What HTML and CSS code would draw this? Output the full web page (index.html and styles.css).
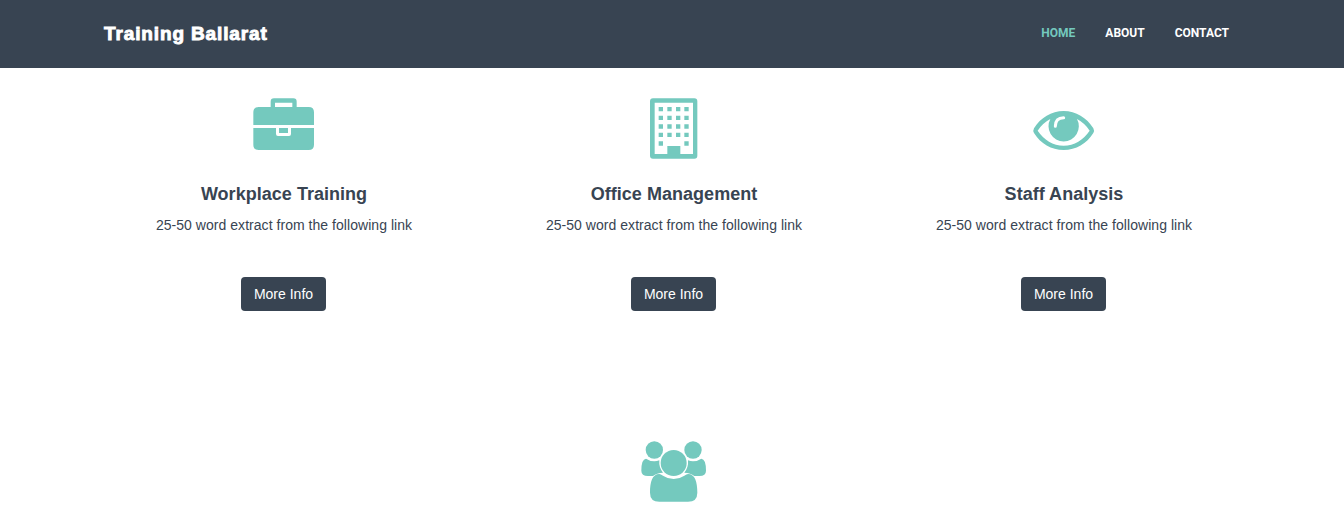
FILE: index.html
```html
<!DOCTYPE html>
<html lang="en">
<head>
<meta charset="utf-8">
<title>Training Ballarat</title>
<link rel="stylesheet" href="styles.css">
</head>
<body>
<header class="navbar">
  <div class="container navbar-inner">
    <a class="brand">Training Ballarat</a>
    <nav class="nav">
      <a class="nav-link active">HOME</a>
      <a class="nav-link">ABOUT</a>
      <a class="nav-link">CONTACT</a>
    </nav>
  </div>
</header>
<main class="container">
  <div class="services">
    <section class="service">
      <svg class="icon" viewBox="0 0 240 240">
        <path fill-rule="evenodd" d="M80 51V35Q80 25 90 25H148Q158 25 158 35V51H194Q210 51 210 67V105H28V67Q28 51 44 51ZM93 51H145V38H93Z"/>
        <path d="M28 114H96V132Q96 138 102 138H135Q141 138 141 132V114H210V164Q210 180 194 180H44Q28 180 28 164Z"/>
        <path d="M105 114H132V129H105Z"/>
      </svg>
      <h2 class="title">Workplace Training</h2>
      <p class="extract">25-50 word extract from the following link</p>
      <a class="btn">More Info</a>
    </section>
    <section class="service">
      <svg class="icon" viewBox="0 0 240 240">
        <path fill-rule="evenodd" d="M57 25H181Q190 25 190 34V197Q190 206 181 206H57Q48 206 48 197V34Q48 25 57 25ZM62 38V192H100V168H139V192H177V38Z"/>
        <g>
          <path d="M74 51h13v13H74zM100 51h13v13h-13zM126 51h13v13h-13zM151 51h13v13h-13z"/>
          <path d="M74 77h13v13H74zM100 77h13v13h-13zM126 77h13v13h-13zM151 77h13v13h-13z"/>
          <path d="M74 103h13v13H74zM100 103h13v13h-13zM126 103h13v13h-13zM151 103h13v13h-13z"/>
          <path d="M74 128h13v13H74zM100 128h13v13h-13zM126 128h13v13h-13zM151 128h13v13h-13z"/>
          <path d="M74 154h13v13H74zM151 154h13v13h-13z"/>
        </g>
      </svg>
      <h2 class="title">Office Management</h2>
      <p class="extract">25-50 word extract from the following link</p>
      <a class="btn">More Info</a>
    </section>
    <section class="service">
      <svg class="icon" viewBox="0 0 240 240">
        <path fill-rule="evenodd" d="M30 115C50 83 82 63 119 63S188 83 208 115Q212 122 208 129C188 161 156 180 119 180S50 161 30 129Q26 122 30 115ZM41 122C60 150 87 167 119 167S178 150 197 122Q182 99 159 87A45.500 45.500 0 1 1 79 87Q56 99 41 122Z"/>
        <path class="glint" d="M94 109Q94 83 119 83"/>
      </svg>
      <h2 class="title">Staff Analysis</h2>
      <p class="extract">25-50 word extract from the following link</p>
      <a class="btn">More Info</a>
    </section>
  </div>
  <div class="team">
    <svg class="icon" viewBox="0 0 240 240">
      <circle cx="61" cy="51" r="26"/>
      <circle cx="177" cy="51" r="26"/>
      <path d="M36 77Q48 85 61 85Q69 85 76 82Q74 103 87 119Q68 120 57 129H42Q22 129 22 113Q22 78 36 77Z"/>
      <path d="M202 77Q190 85 177 85Q169 85 162 82Q164 103 151 119Q170 120 181 129H196Q216 129 216 113Q216 78 202 77Z"/>
      <circle cx="119" cy="90" r="39"/>
      <path d="M76 123Q80 123 87 128Q102 138 119 138T151 128Q158 123 162 123C183 123 190 147 190 179Q190 206 162 206H76Q48 206 48 179C48 147 55 123 76 123Z"/>
    </svg>
  </div>
</main>
</body>
</html>
```
FILE: styles.css
```css
* { box-sizing: border-box; }
body {
  margin: 0;
  height: 513px;
  overflow: hidden;
  background: #fff;
  color: #384452;
  font: 14px/20px "Liberation Sans", Arial, sans-serif;
}
.container { width: 1170px; margin-left: 89px; }
.navbar { height: 68px; background: #384452; }
.navbar-inner {
  display: flex;
  justify-content: space-between;
  align-items: center;
  height: 67px;
  padding: 0 15px;
}
.brand {
  color: #fff;
  font-size: 19px;
  font-weight: 700;
  letter-spacing: 0.87px;
  -webkit-text-stroke: 0.9px #fff;
}
.nav { display: flex; padding-bottom: 1px; }
.nav-link {
  padding: 0 15px;
  color: #fff;
  font: 700 12px/20px Roboto, sans-serif;
}
.active { color: #74c9be; }
.services { display: grid; grid-template-columns: repeat(3, 1fr); }
.service, .team {
  display: flex;
  flex-direction: column;
  align-items: center;
  padding-top: 22px;
}
.icon { width: 80px; height: 80px; fill: #74c9be; }
.glint { fill: none; stroke: #fff; stroke-width: 9; stroke-linecap: round; }
.title { margin: 14px 0 11px; font-size: 18px; line-height: 20px; letter-spacing: 0.03px; }
.extract { margin: 0 0 42px; letter-spacing: 0.04px; }
.btn {
  width: 85px;
  height: 34px;
  margin-right: 1px;
  border-radius: 4px;
  background: #384452;
  color: #fff;
  text-align: center;
  line-height: 34px;
}
.team { padding-top: 122px; }
```
